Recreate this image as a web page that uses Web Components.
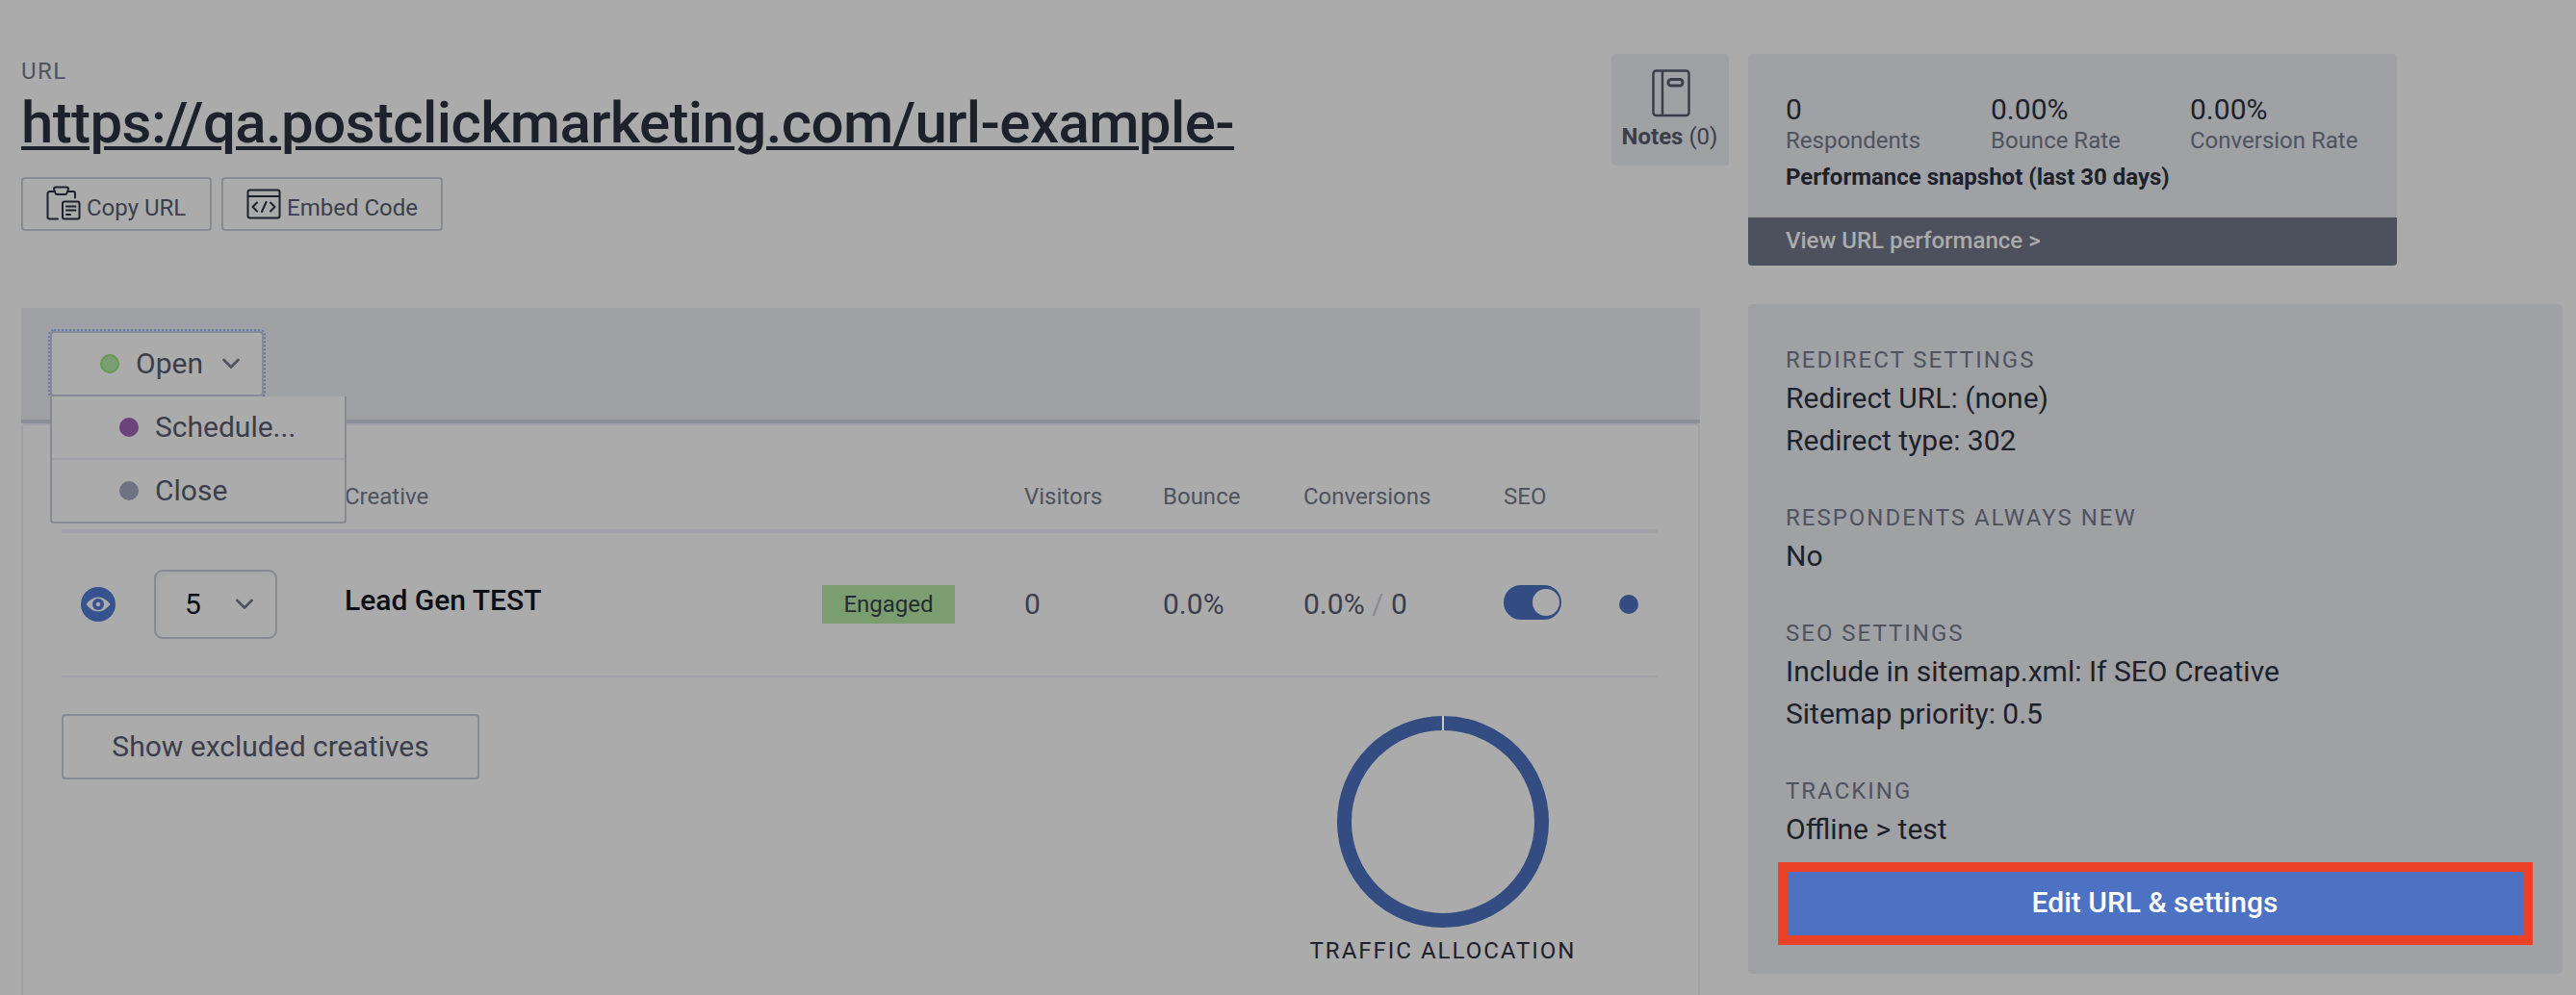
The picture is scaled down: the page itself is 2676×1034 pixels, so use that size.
<!DOCTYPE html>
<html lang="en">
<head>
<meta charset="utf-8">
<title>URL</title>
<style>
  body {
    margin: 0;
    background: #ababab;
    font-family: Roboto, "Liberation Sans", sans-serif;
    color: #1d212b;
    --panel: #a0a1a5;
    --muted: #4e535f;
    --text: #3b3e4b;
    --ink: #1d212b;
    --line: #878b91;
    --blue: #334d82;
  }
</style>
</head>
<body>
<url-page></url-page>

<script>
class BaseElement extends HTMLElement {
  constructor() {
    super();
    this.attachShadow({ mode: 'open' });
  }

  connectedCallback() {
    this.shadowRoot.innerHTML = `
      <style>
        *, :host { box-sizing: border-box; }
        ${this.styles()}
      </style>
      ${this.markup()}
    `;
  }
}

const icons = {
  copy: `<svg width="36" height="36" viewBox="0 0 36 36" fill="none" stroke="#1d212b" stroke-width="2" stroke-linecap="round" stroke-linejoin="round">
    <path d="M12 34.500H3.500a2 2 0 0 1-2-2V8a2 2 0 0 1 2-2H8M23 6h5a2 2 0 0 1 2 2v4.500"/>
    <path d="M8 3.500a2 2 0 0 1 2-2h11a2 2 0 0 1 2 2l-1.500 4a2 2 0 0 1-2 1.500h-8a2 2 0 0 1-2-1.500z"/>
    <rect x="17" y="16.500" width="17.500" height="18" rx="2"/>
    <path d="M21 21.500h9.500M21 25.500h9.500M21 30h4"/>
  </svg>`,
  embed: `<svg width="36" height="32" viewBox="0 0 36 32" fill="none" stroke="#1d212b" stroke-width="2" stroke-linecap="round" stroke-linejoin="round">
    <rect x="1.500" y="1.500" width="33" height="29" rx="2"/>
    <path d="M2 8h32M11 14.500l-4.500 4.500 4.500 4.500M25 14.500l4.500 4.500-4.500 4.500M20.500 14l-4.500 10"/>
  </svg>`,
  notes: `<svg width="42" height="50" viewBox="0 0 42 50" fill="none" stroke="#3b3e4b" stroke-width="2.500" stroke-linejoin="round">
    <rect x="3.500" y="1.500" width="37" height="46.500" rx="3"/>
    <path d="M13 1.500v46.500"/>
    <rect x="19" y="10.500" width="15" height="6.500" rx="3" stroke-width="3"/>
  </svg>`,
  chevron: `<svg width="20" height="12" viewBox="0 0 20 12" fill="none" stroke="#4e535f" stroke-width="2.700" stroke-linecap="round" stroke-linejoin="round">
    <path d="M2.500 2l7.500 7.500L17.500 2"/>
  </svg>`,
  eye: `<svg width="36" height="36" viewBox="0 0 36 36">
    <circle cx="18" cy="18" r="18" fill="#36528f"/>
    <path d="M5.500 18Q11 10.500 18 10.500T30.500 18Q25 25.500 18 25.500T5.500 18z" fill="#ababab"/>
    <circle cx="18" cy="18" r="6" fill="#36528f"/>
    <circle cx="18" cy="18" r="2.300" fill="#ababab"/>
  </svg>`
};

class UiIcon extends BaseElement {
  styles() {
    return `:host { display: inline-flex; flex: none; } svg { display: block; }`;
  }

  markup() {
    return icons[this.getAttribute('name')];
  }
}

class StatusDot extends BaseElement {
  styles() {
    return `
      :host {
        display: block;
        flex: none;
        width: 20px;
        height: 20px;
        border-radius: 50%;
        background: var(--dot);
        border: 2px solid var(--dot-edge, var(--dot));
      }
    `;
  }

  markup() {
    return '';
  }
}

class OutlineButton extends BaseElement {
  styles() {
    return `
      :host {
        display: flex;
        align-items: center;
        border: 2px solid var(--line);
        border-radius: 4px;
        color: var(--text);
        white-space: nowrap;
      }
    `;
  }

  markup() {
    return `<slot></slot>`;
  }
}

class UrlHeader extends BaseElement {
  styles() {
    return `
      :host { display: flex; justify-content: space-between; width: 1774px; height: 264px; }
      .label { height: 28px; line-height: 28px; margin-top: 4px; font-size: 24px; letter-spacing: 1.5px; color: var(--muted); }
      h1 {
        margin: 2px 0 0;
        font-size: 60px;
        line-height: 76px;
        font-weight: 500;
        letter-spacing: -0.6px;
        color: var(--ink);
        text-decoration: underline;
        text-decoration-thickness: 4px;
        text-underline-offset: 4px;
        white-space: nowrap;
      }
      .buttons { display: flex; gap: 10px; margin-top: 18px; }
      outline-button { height: 56px; padding: 6px 24px 0; font-size: 24px; }
      outline-button span { margin: 2px 0 0 6px; }
      .copy { width: 198px; }
      .embed { width: 230px; }
      .copy ui-icon { margin-top: -8px; }
      .embed ui-icon { margin-top: -6px; }
      .notes {
        display: flex;
        flex-direction: column;
        align-items: center;
        width: 122px;
        height: 116px;
        padding: 16px 1px 0 0;
        background: var(--panel);
        border-radius: 4px;
        font-size: 24px;
        line-height: 28px;
        color: var(--text);
      }
      .notes div { margin-top: 6px; }
    `;
  }

  markup() {
    return `
      <div>
        <div class="label">URL</div>
        <h1>https://qa.postclickmarketing.com/url-example-</h1>
        <div class="buttons">
          <outline-button class="copy"><ui-icon name="copy"></ui-icon><span>Copy URL</span></outline-button>
          <outline-button class="embed"><ui-icon name="embed"></ui-icon><span>Embed Code</span></outline-button>
        </div>
      </div>
      <div class="notes">
        <ui-icon name="notes"></ui-icon>
        <div><b>Notes</b> (0)</div>
      </div>
    `;
  }
}

class StatusMenu extends BaseElement {
  styles() {
    return `
      :host { display: block; position: relative; width: 222px; font-size: 30px; color: var(--text); }
      .current {
        display: flex;
        align-items: center;
        height: 68px;
        padding-left: 50px;
        border: 2px solid var(--line);
        border-radius: 4px;
        background: #ababab;
        outline: 2px dotted #5f78ad;
      }
      .current span { margin: -2px 19px 0 17px; }
      .menu {
        position: absolute;
        z-index: 2;
        top: 68px;
        left: 0;
        width: 308px;
        border: 2px solid var(--line);
        border-top: 0;
        border-radius: 0 0 4px 4px;
        background: #ababab;
      }
      .item { display: flex; align-items: center; gap: 17px; height: 64px; padding-left: 70px; }
      .item + .item { height: 66px; border-top: 2px solid #a0a1a6; }
      .item span { margin-top: -2px; }
    `;
  }

  markup() {
    return `
      <div class="current">
        <status-dot style="--dot: #7b9e71; --dot-edge: #64994f"></status-dot>
        <span>Open</span>
        <ui-icon name="chevron"></ui-icon>
      </div>
      <div class="menu">
        <div class="item"><status-dot style="--dot: #6b447b"></status-dot><span>Schedule...</span></div>
        <div class="item"><status-dot style="--dot: #6c7482"></status-dot><span>Close</span></div>
      </div>
    `;
  }
}

class CreativeTable extends BaseElement {
  styles() {
    return `
      :host { display: block; font-size: 30px; color: var(--text); }
      .row { display: grid; grid-template-columns: 96px 198px 496px 210px 144px 146px 208px 120px 1fr; align-items: center; }
      .head { height: 112px; padding-top: 39px; border-bottom: 4px solid #a0a1a6; font-size: 24px; color: var(--muted); }
      .head span:first-child { grid-column: 3; }
      .head span:nth-child(2) { grid-column: 5; }
      .body { height: 150px; border-bottom: 2px solid #a0a1a6; }
      .body ui-icon[name=eye] { margin-left: 20px; }
      .num { margin-top: -1px; }
      .select {
        display: flex;
        align-items: center;
        justify-content: space-between;
        width: 128px;
        height: 72px;
        padding: 0 22px 0 30px;
        border: 2px solid #878a91;
        border-radius: 9px;
        box-shadow: inset 2px 2px 5px rgba(0,0,0,.04);
        color: #0b0e15;
      }
      .select span { margin-top: -1px; }
      .name { margin-top: -10px; font-weight: 500; color: #0b0e15; }
      .badge { width: 138px; height: 40px; line-height: 40px; text-align: center; font-size: 24px; background: #7b9e71; color: #262c33; }
      .slash { color: #888b94; }
      .toggle { display: flex; align-items: center; justify-content: flex-end; width: 60px; height: 36px; margin-top: -4px; padding: 2px; border-radius: 18px; background: var(--blue); }
      .toggle i { width: 28px; height: 28px; border-radius: 50%; background: #ababab; }
    `;
  }

  markup() {
    return `
      <div class="row head">
        <span>Creative</span><span>Visitors</span><span>Bounce</span><span>Conversions</span><span>SEO</span>
      </div>
      <div class="row body">
        <ui-icon name="eye"></ui-icon>
        <div class="select"><span>5</span><ui-icon name="chevron"></ui-icon></div>
        <div class="name">Lead Gen TEST</div>
        <div class="badge">Engaged</div>
        <div class="num">0</div>
        <div class="num">0.0%</div>
        <div class="num">0.0% <span class="slash">/</span> 0</div>
        <div class="toggle"><i></i></div>
        <status-dot style="--dot: #334d82"></status-dot>
      </div>
    `;
  }
}

class TrafficChart extends BaseElement {
  styles() {
    return `
      :host { display: flex; flex-direction: column; align-items: center; width: 280px; }
      svg { display: block; }
      div { margin-top: 8px; font-size: 24px; line-height: 32px; letter-spacing: 2px; white-space: nowrap; color: var(--ink); }
    `;
  }

  markup() {
    return `
      <svg width="220" height="220" viewBox="0 0 220 220">
        <circle cx="110" cy="110" r="102.500" fill="none" stroke="#334d82" stroke-width="15"/>
        <path d="M110 0v15" stroke="#c4c8d0" stroke-width="2"/>
      </svg>
      <div>TRAFFIC ALLOCATION</div>
    `;
  }
}

class CreativePanel extends BaseElement {
  styles() {
    return `
      :host { display: block; width: 1744px; }
      .bar { height: 120px; padding: 24px 30px 0; background: var(--panel); border-bottom: 4px solid #8b8d97; }
      .content { height: 610px; padding: 0 42px 0 40px; border: 2px solid #a0a1a6; border-radius: 4px; }
      .bottom { display: flex; justify-content: space-between; align-items: flex-start; padding: 40px 83px 0 0; }
      outline-button { width: 434px; height: 68px; margin-top: -2px; padding-bottom: 2px; justify-content: center; font-size: 30px; }
    `;
  }

  markup() {
    return `
      <div class="bar"><status-menu></status-menu></div>
      <div class="content">
        <creative-table></creative-table>
        <div class="bottom">
          <outline-button>Show excluded creatives</outline-button>
          <traffic-chart></traffic-chart>
        </div>
      </div>
    `;
  }
}

class PerformanceCard extends BaseElement {
  styles() {
    return `
      :host { display: block; width: 674px; height: 220px; border-radius: 4px; overflow: hidden; background: var(--panel); }
      .main { height: 170px; padding: 40px 0 0 39px; }
      .stats { display: grid; grid-template-columns: 213px 207px 1fr; }
      .value { font-size: 30px; line-height: 36px; color: var(--ink); }
      .label { font-size: 24px; line-height: 28px; color: var(--muted); }
      .title { margin-top: 10px; font-size: 24px; line-height: 28px; font-weight: 700; }
      .link { height: 50px; padding-left: 39px; line-height: 48px; font-size: 24px; font-weight: 500; background: #4c515d; color: #ababab; }
    `;
  }

  markup() {
    return `
      <div class="main">
        <div class="stats">
          <div><div class="value">0</div><div class="label">Respondents</div></div>
          <div><div class="value">0.00%</div><div class="label">Bounce Rate</div></div>
          <div><div class="value">0.00%</div><div class="label">Conversion Rate</div></div>
        </div>
        <div class="title">Performance snapshot (last 30 days)</div>
      </div>
      <div class="link">View URL performance &gt;</div>
    `;
  }
}

class SettingsGroup extends BaseElement {
  styles() {
    return `
      :host { display: block; margin-bottom: 38px; font-size: 30px; line-height: 44px; color: var(--ink); }
      .label { height: 38px; line-height: 40px; font-size: 24px; letter-spacing: 2px; color: var(--muted); }
    `;
  }

  markup() {
    return `<div class="label">${this.getAttribute('label')}</div><slot></slot>`;
  }
}

class SettingsPanel extends BaseElement {
  styles() {
    return `
      :host { display: block; width: 846px; height: 696px; padding: 38px 31px 0 39px; border-radius: 4px; background: var(--panel); }
      .edit {
        display: flex;
        align-items: center;
        justify-content: center;
        width: 784px;
        height: 86px;
        margin: -26px 0 0 -8px;
        padding: 0 1px 3px 0;
        border: 10px solid #eb4127;
        background: #4d71c3;
        color: #fff;
        font-size: 30px;
        font-weight: 500;
      }
    `;
  }

  markup() {
    return `
      <settings-group label="REDIRECT SETTINGS"><div>Redirect URL: (none)</div><div>Redirect type: 302</div></settings-group>
      <settings-group label="RESPONDENTS ALWAYS NEW"><div>No</div></settings-group>
      <settings-group label="SEO SETTINGS"><div>Include in sitemap.xml: If SEO Creative</div><div>Sitemap priority: 0.5</div></settings-group>
      <settings-group label="TRACKING"><div>Offline &gt; test</div></settings-group>
      <div class="edit">Edit URL &amp; settings</div>
    `;
  }
}

class UrlPage extends BaseElement {
  styles() {
    return `
      :host { display: flex; gap: 20px; width: 2676px; height: 1034px; padding: 56px 0 0 22px; overflow: hidden; }
      .side { display: flex; flex-direction: column; gap: 40px; }
    `;
  }

  markup() {
    return `
      <div>
        <url-header></url-header>
        <creative-panel></creative-panel>
      </div>
      <div class="side">
        <performance-card></performance-card>
        <settings-panel></settings-panel>
      </div>
    `;
  }
}

customElements.define('ui-icon', UiIcon);
customElements.define('status-dot', StatusDot);
customElements.define('outline-button', OutlineButton);
customElements.define('url-header', UrlHeader);
customElements.define('status-menu', StatusMenu);
customElements.define('creative-table', CreativeTable);
customElements.define('traffic-chart', TrafficChart);
customElements.define('creative-panel', CreativePanel);
customElements.define('performance-card', PerformanceCard);
customElements.define('settings-group', SettingsGroup);
customElements.define('settings-panel', SettingsPanel);
customElements.define('url-page', UrlPage);
</script>
</body>
</html>
